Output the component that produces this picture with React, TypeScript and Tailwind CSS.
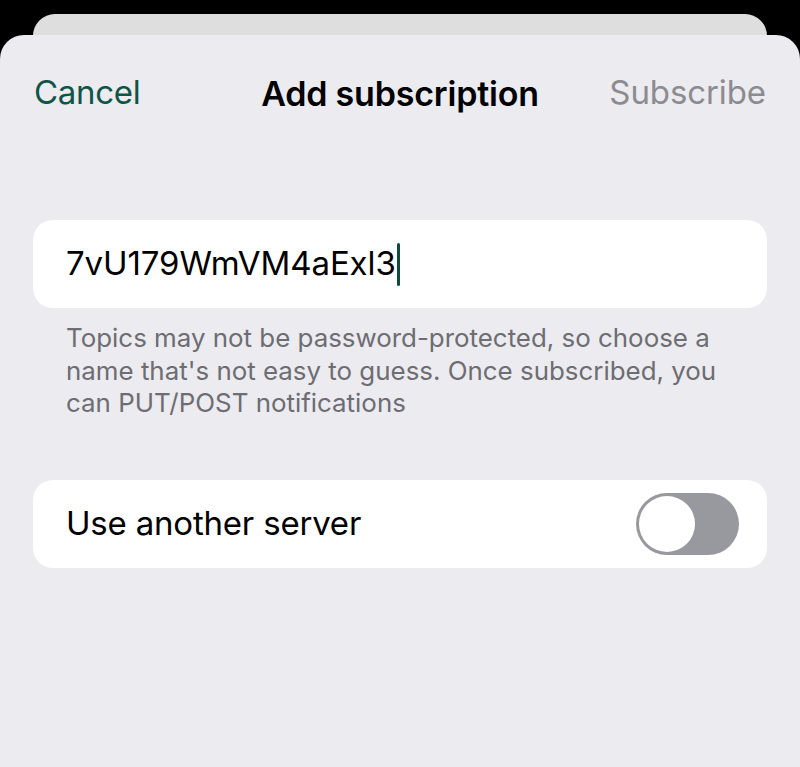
import React from "react";

export default function App() {
  const font = { fontFamily: 'Inter, "Noto Sans", sans-serif' };
  return (
    <div className="w-[800px] h-[767px] bg-black overflow-hidden relative" style={font}>
      <div className="pt-[14px] px-[33px]">
        <div className="h-[40px] bg-[#dededf] rounded-t-[22px]" />
      </div>
      <div className="absolute left-0 right-0 top-[35px] bottom-0 bg-[#ebebf0] rounded-t-[24px]">
        <div className="h-[116px] grid grid-cols-[1fr_auto_1fr] items-center px-[34px]">
          <span className="justify-self-start text-[33px] text-[#0f5446] tracking-[-0.3px]">Cancel</span>
          <span className="text-[34px] font-semibold text-black tracking-[-0.2px]">Add subscription</span>
          <span className="justify-self-end text-[33px] text-[#8b8b90] tracking-[-0.1px]">Subscribe</span>
        </div>
        <div className="px-[33px]">
          <div className="mt-[69px] h-[88px] bg-white rounded-[20px] flex items-center px-[33px]">
            <span className="text-[33px] text-black tracking-[-0.1px]">7vU179WmVM4aExl3</span>
            <span className="ml-[1px] w-[3px] h-[43px] bg-[#0f4a3d] rounded-full" />
          </div>
          <p className="mt-[14px] px-[33px] text-[25.9px] leading-[32.5px] text-[#6d6d72]">
            Topics may not be password-protected, so choose a name that's not easy to guess. Once subscribed, you can PUT/POST notifications
          </p>
          <div className="mt-[60px] h-[88px] bg-white rounded-[20px] flex items-center justify-between pl-[33px] pr-[28px]">
            <span className="text-[33px] text-black tracking-[-0.2px]">Use another server</span>
            <div className="w-[103px] h-[62px] rounded-full bg-[#98989f] p-[3px] flex items-center">
              <div className="w-[56px] h-[56px] rounded-full bg-white" />
            </div>
          </div>
        </div>
      </div>
    </div>
  );
}
